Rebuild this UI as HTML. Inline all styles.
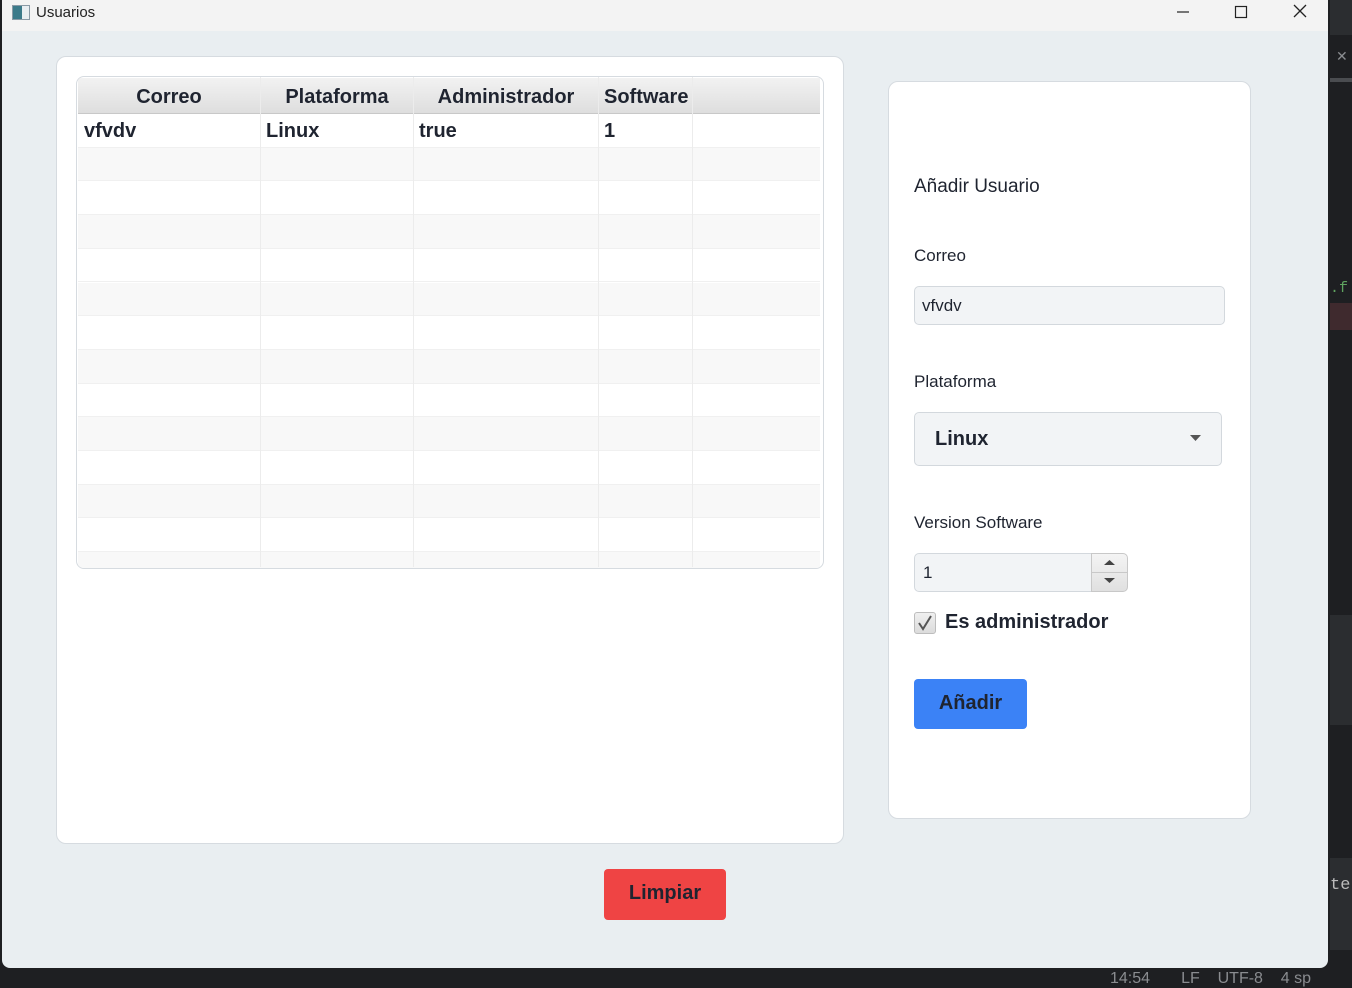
<!DOCTYPE html>
<html><head><meta charset="utf-8"><style>
*{margin:0;padding:0;box-sizing:border-box}
body{width:1352px;height:985px;position:relative;overflow:hidden;background:#1e1f22;font-family:"Liberation Sans","DejaVu Sans",sans-serif;color:#1f2430}
.a{position:absolute}
.win{left:2px;top:0;width:1326px;height:968px;background:#e9eef1;border-radius:0 0 8px 8px}
.title{left:0;top:0;width:1326px;height:31px;background:#f3f3f3}
.card{background:#fff;border:1px solid #d6dbe0;border-radius:10px}
.b{font-weight:bold}
.row{position:absolute;left:0;width:742px;height:33.7px;border-bottom:1px solid #f0f0f0}
.vl{position:absolute;top:0;width:1px;height:490px;background:#ececec}
</style></head><body>
<div class="a" style="left:1330px;top:0;width:22px;height:35px;background:#2b2d30"></div>
<div class="a" style="left:1330px;top:78px;width:22px;height:4px;background:#4a4c50"></div>
<div class="a" style="left:1336px;top:48px;color:#8a8c90;font-size:14px">✕</div>
<div class="a" style="left:1330px;top:280px;color:#5fa35f;font-size:15px;font-family:'Liberation Mono',monospace">.f</div>
<div class="a" style="left:1330px;top:303px;width:22px;height:27px;background:#3f2a2e"></div>
<div class="a" style="left:1330px;top:615px;width:22px;height:110px;background:#2b2d30"></div>
<div class="a" style="left:1330px;top:858px;width:22px;height:92px;background:#2b2d30"></div>
<div class="a" style="left:1330px;top:876px;color:#bbb;font-size:17px;font-family:'Liberation Mono',monospace">ter</div>
<div class="a" style="left:1110px;top:970px;color:#8a8c90;font-size:16px;white-space:nowrap">14:54 &nbsp;&nbsp;&nbsp;&nbsp;&nbsp; LF &nbsp;&nbsp; UTF-8 &nbsp;&nbsp; 4 sp</div>

<div class="a win">
 <div class="a title">
  <div class="a" style="left:10px;top:5px;width:18px;height:15px;border:1px solid #8a9aa6;background:linear-gradient(90deg,#3b7a8a 0 55%,#e8eef2 55%)"></div>
  <div class="a" style="left:34px;top:4px;font-size:15px;color:#222">Usuarios</div>
  <svg class="a" style="left:1170px;top:4px" width="150" height="18"><path d="M5 8h12" stroke="#222" stroke-width="1.2"/><rect x="63.5" y="2.5" width="11" height="11" fill="none" stroke="#222" stroke-width="1.2"/><path d="M122 1l12 12M134 1l-12 12" stroke="#222" stroke-width="1.3"/></svg>
 </div>

 <div class="a card" style="left:54px;top:56px;width:788px;height:788px"></div>
 <div class="a" style="left:74px;top:76px;width:748px;height:493px;border:1px solid #d6dbe0;border-radius:8px;background:#fff;overflow:hidden">
  <div class="a" style="left:1px;top:1px;width:742px;height:36px;background:linear-gradient(#f2f2f2,#dedede);border-bottom:1px solid #c8c8c8"></div>
  <div class="a" style="left:1px;top:37px;width:742px;height:455px">
   <div class="row" style="top:0;background:#fff"></div>
   <div class="row" style="top:33.7px;background:#f8f8f8"></div>
   <div class="row" style="top:67.4px;background:#fff"></div>
   <div class="row" style="top:101.1px;background:#f8f8f8"></div>
   <div class="row" style="top:134.8px;background:#fff"></div>
   <div class="row" style="top:168.5px;background:#f8f8f8"></div>
   <div class="row" style="top:202.2px;background:#fff"></div>
   <div class="row" style="top:235.9px;background:#f8f8f8"></div>
   <div class="row" style="top:269.6px;background:#fff"></div>
   <div class="row" style="top:303.3px;background:#f8f8f8"></div>
   <div class="row" style="top:337px;background:#fff"></div>
   <div class="row" style="top:370.7px;background:#f8f8f8"></div>
   <div class="row" style="top:404.4px;background:#fff"></div>
   <div class="row" style="top:438.1px;background:#f8f8f8"></div>
  </div>
  <div class="vl" style="left:183px"></div><div class="vl" style="left:336px"></div><div class="vl" style="left:521px"></div><div class="vl" style="left:615px"></div>
  <div class="a b" style="left:1px;top:9px;width:182px;text-align:center;font-size:20px">Correo</div>
  <div class="a b" style="left:184px;top:9px;width:152px;text-align:center;font-size:20px">Plataforma</div>
  <div class="a b" style="left:337px;top:9px;width:184px;text-align:center;font-size:20px">Administrador</div>
  <div class="a b" style="left:527px;top:9px;font-size:20px">Software</div>
  <div class="a b" style="left:7px;top:43px;font-size:20px">vfvdv</div>
  <div class="a b" style="left:189px;top:43px;font-size:20px">Linux</div>
  <div class="a b" style="left:342px;top:43px;font-size:20px">true</div>
  <div class="a b" style="left:527px;top:43px;font-size:20px">1</div>
 </div>

 <div class="a card" style="left:886px;top:81px;width:363px;height:738px"></div>
 <div class="a" style="left:912px;top:176px;font-size:19px">Añadir Usuario</div>
 <div class="a" style="left:912px;top:246px;font-size:17px">Correo</div>
 <div class="a" style="left:912px;top:286px;width:311px;height:39px;background:#f2f4f6;border:1px solid #d3d8dd;border-radius:5px"></div>
 <div class="a" style="left:920px;top:296px;font-size:17px">vfvdv</div>
 <div class="a" style="left:912px;top:372px;font-size:17px">Plataforma</div>
 <div class="a" style="left:912px;top:412px;width:308px;height:54px;background:#f2f4f6;border:1px solid #d3d8dd;border-radius:5px"></div>
 <div class="a b" style="left:933px;top:428px;font-size:20px">Linux</div>
 <svg class="a" style="left:1187px;top:434px" width="14" height="9"><path d="M1 1h11l-5.5 6z" fill="#555"/></svg>
 <div class="a" style="left:912px;top:513px;font-size:17px">Version Software</div>
 <div class="a" style="left:912px;top:553px;width:178px;height:39px;background:#f2f4f6;border:1px solid #d3d8dd;border-radius:5px 0 0 5px"></div>
 <div class="a" style="left:921px;top:563px;font-size:17px">1</div>
 <div class="a" style="left:1089px;top:553px;width:37px;height:39px;background:linear-gradient(#f4f4f4,#e0e0e0);border:1px solid #c8c8c8;border-radius:0 5px 5px 0"></div>
 <div class="a" style="left:1090px;top:572px;width:35px;height:1px;background:#c8c8c8"></div>
 <svg class="a" style="left:1100px;top:557px" width="16" height="30"><path d="M2 8h11l-5.5-5z" fill="#444"/><path d="M2 21h11l-5.5 5z" fill="#444"/></svg>
 <div class="a" style="left:912px;top:612px;width:22px;height:22px;background:linear-gradient(#f0f0f0,#dcdcdc);border:1px solid #bdbdbd;border-radius:3px"></div>
 <svg class="a" style="left:914px;top:614px" width="18" height="18"><path d="M3 9l4 6 8-13" fill="none" stroke="#555" stroke-width="2"/></svg>
 <div class="a b" style="left:943px;top:611px;font-size:20px">Es administrador</div>
 <div class="a" style="left:912px;top:679px;width:113px;height:50px;background:#3b82f6;border-radius:4px"></div>
 <div class="a b" style="left:912px;top:692px;width:113px;text-align:center;font-size:20px">Añadir</div>

 <div class="a" style="left:602px;top:869px;width:122px;height:51px;background:#ef4444;border-radius:4px"></div>
 <div class="a b" style="left:602px;top:882px;width:122px;text-align:center;font-size:20px">Limpiar</div>
</div>
</body></html>
